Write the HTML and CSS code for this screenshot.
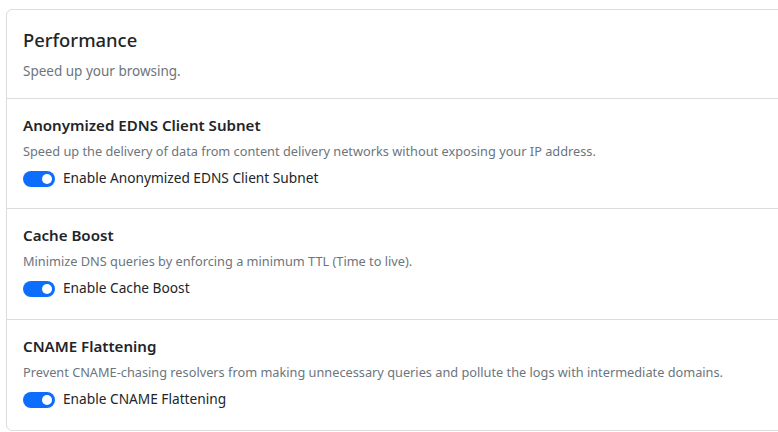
FILE: index.html
```html
<!DOCTYPE html>
<html>
<head>
<meta charset="utf-8">
<link rel="stylesheet" href="styles.css">
</head>
<body>
<div class="card">
  <div class="card-header">
    <h2 class="title">Performance</h2>
    <p class="subtitle">Speed up your browsing.</p>
  </div>
  <div class="section">
    <h3 class="section-title">Anonymized EDNS Client Subnet</h3>
    <p class="desc">Speed up the delivery of data from content delivery networks without exposing your IP address.</p>
    <label class="switch-row"><span class="switch"></span><span class="label">Enable Anonymized EDNS Client Subnet</span></label>
  </div>
  <div class="section">
    <h3 class="section-title">Cache Boost</h3>
    <p class="desc">Minimize DNS queries by enforcing a minimum TTL (Time to live).</p>
    <label class="switch-row"><span class="switch"></span><span class="label">Enable Cache Boost</span></label>
  </div>
  <div class="section">
    <h3 class="section-title">CNAME Flattening</h3>
    <p class="desc">Prevent CNAME-chasing resolvers from making unnecessary queries and pollute the logs with intermediate domains.</p>
    <label class="switch-row"><span class="switch"></span><span class="label">Enable CNAME Flattening</span></label>
  </div>
</div>
</body>
</html>
```
FILE: styles.css
```css
* { box-sizing: border-box; }
html, body { margin: 0; padding: 0; background: #fff; }
body {
  font-family: "Noto Sans", "Open Sans", sans-serif;
  color: #212529;
  padding: 9px 0 0 6px;
  width: 800px;
  overflow: hidden;
}
.card {
  border: 1px solid #dcdcdf;
  border-radius: 6px;
  width: 790px;
  background: #fff;
}
.card-header {
  padding: 16px 16px 17px;
  border-bottom: 1px solid #dcdcdf;
}
.title {
  margin: 0;
  font-size: 18.4px;
  font-weight: 500;
  line-height: 28px;
}
.subtitle {
  margin: 7px 0 0;
  font-size: 13.5px;
  line-height: 20px;
  color: #6c757d;
}
.section {
  padding: 15px 16px 20px;
  border-bottom: 1px solid #dcdcdf;
}
.section + .section { padding-bottom: 21px; }
.section:last-child { border-bottom: none; }
.section-title {
  margin: 0;
  font-size: 15.1px;
  font-weight: 600;
  line-height: 22px;
}
.desc {
  margin: 5px 0 0;
  font-size: 12.75px;
  line-height: 20px;
  color: #6c757d;
}
.switch-row {
  display: flex;
  align-items: center;
  gap: 8px;
  margin-top: 7px;
  font-size: 13.7px;
  line-height: 20px;
}
.switch {
  position: relative;
  width: 32px;
  height: 16px;
  margin-top: 2px;
  border-radius: 8px;
  background: #0d6efd;
  flex: none;
}
.switch::after {
  content: "";
  position: absolute;
  right: 3px;
  top: 3px;
  width: 10px;
  height: 10px;
  border-radius: 50%;
  background: #fff;
}
```
